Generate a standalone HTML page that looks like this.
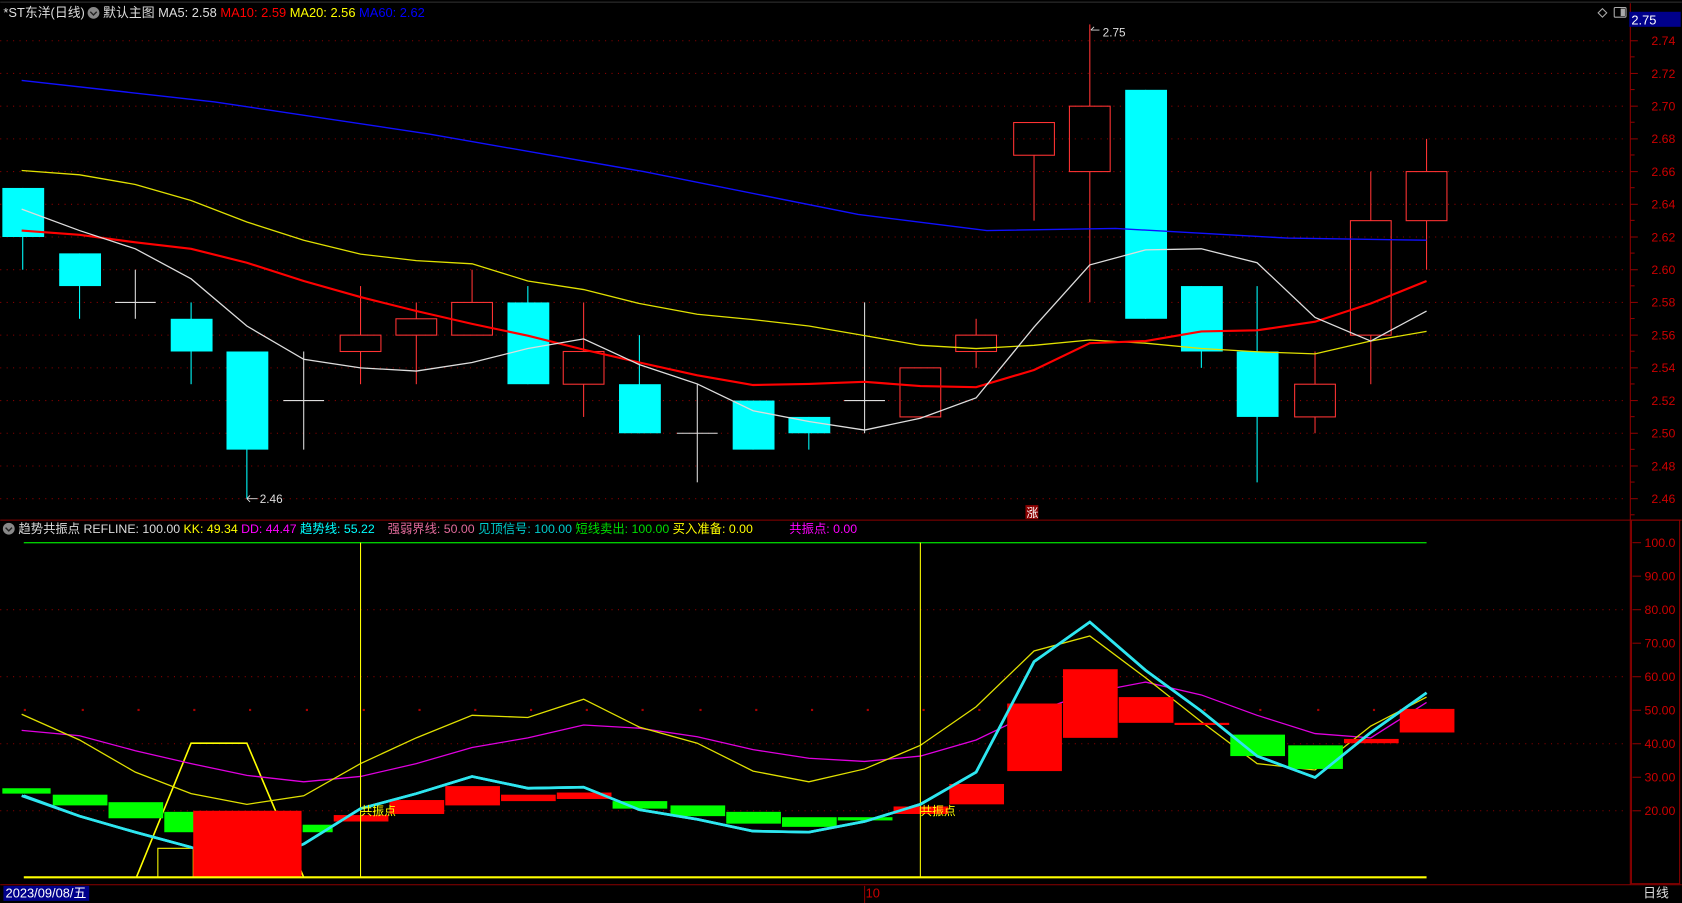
<!DOCTYPE html>
<html><head><meta charset="utf-8"><style>
html,body{margin:0;padding:0;background:#000;overflow:hidden}
svg{display:block}
text{font-family:"Liberation Sans","Noto Sans CJK SC",sans-serif}
</style></head><body>
<svg id="s" width="1682" height="903" viewBox="0 0 1568 842" xmlns="http://www.w3.org/2000/svg">
<rect width="1568" height="842" fill="#000"/>
<g id="g"></g>
<text x="3" y="16" font-size="12" fill="#ddd">*ST东洋(日线)</text>
<circle cx="87" cy="12" r="5.5" fill="#888"/><path d="M84 11l3 3 3-3" stroke="#222" fill="none" stroke-width="1.3"/>
<text x="96" y="16" font-size="12"><tspan fill="#ddd">默认主图 MA5: 2.58 </tspan><tspan fill="#f00">MA10: 2.59 </tspan><tspan fill="#ff0">MA20: 2.56 </tspan><tspan fill="#00f">MA60: 2.62</tspan></text>
<circle cx="8" cy="493" r="5.5" fill="#888"/><path d="M5 492l3 3 3-3" stroke="#222" fill="none" stroke-width="1.3"/>
<text x="17" y="497" font-size="11.5"><tspan fill="#ddd">趋势共振点 REFLINE: 100.00 </tspan><tspan fill="#ff0">KK: 49.34 </tspan><tspan fill="#f0f">DD: 44.47 </tspan><tspan fill="#0ff">趋势线: 55.22</tspan><tspan fill="#e06a9a" dx="12">强弱界线: 50.00 </tspan><tspan fill="#0cc">见顶信号: 100.00 </tspan><tspan fill="#0d0">短线卖出: 100.00 </tspan><tspan fill="#ff0">买入准备: 0.00</tspan><tspan fill="#f0f" dx="34">共振点: 0.00</tspan></text>
<rect x="1519" y="11" width="48" height="14" fill="#00008b"/>
<text x="1521" y="23" font-size="12" fill="#fff">2.75</text>
<path d="M1490 12l4 -4 4 4 -4 4z" stroke="#aaa" fill="none"/>
<rect x="1505" y="7" width="11" height="9" rx="1" stroke="#aaa" fill="none"/><rect x="1511" y="8" width="4" height="7" fill="#aaa"/>
<rect x="3" y="826" width="80" height="14" fill="#00008b"/>
<text x="5" y="837" font-size="12" fill="#fff">2023/09/08/五</text>
<text x="807" y="837" font-size="12" fill="#c00">10</text>
<text x="1532" y="837" font-size="12" fill="#ddd">日线</text>
<rect x="956" y="471" width="12" height="13" fill="#8b0000"/><text x="957" y="482" font-size="11" fill="#fff">涨</text>
<text x="1028" y="34" font-size="11" fill="#ddd">2.75</text><path d="M1017 28l3 -3 M1017 28l8 0" stroke="#ddd" fill="none" stroke-width=".8"/>
<text x="242" y="469" font-size="11" fill="#ddd">2.46</text><path d="M230 465l10 0 M230 465l3 -3 M230 465l3 3" stroke="#ddd" fill="none" stroke-width=".8"/>
</svg>
<script>
const g=document.getElementById('g');let h='';
const P=p=>38+(2.74-p)/0.02*30.5, V=v=>506+(100-v)*3.125;
h+='<line x1="0" y1="2" x2="1568" y2="2" stroke="#333"/>';
h+='<line x1="1520" y1="3" x2="1520" y2="825" stroke="#8b0000"/>';
h+='<line x1="0" y1="485" x2="1568" y2="485" stroke="#8b0000"/>';
h+='<line x1="0" y1="825" x2="1568" y2="825" stroke="#8b0000"/>';
h+='<rect x="1521" y="485" width="45" height="339" fill="none" stroke="#8b0000"/>';
h+='<line x1="806" y1="826" x2="806" y2="842" stroke="#8b0000"/>';
for(let i=0;i<15;i++){let p=2.74-i*0.02,y=P(p);h+=`<line x1="0" y1="${y}" x2="1518" y2="${y}" stroke="#8b0000" stroke-dasharray="1 5"/><line x1="1520" y1="${y}" x2="1527" y2="${y}" stroke="#8b0000"/><line x1="1520" y1="${y+15}" x2="1524" y2="${y+15}" stroke="#8b0000"/><text x="1562" y="${y+4}" font-size="11.5" fill="#c00" text-anchor="end">${p.toFixed(2)}</text>`}
for(let v=100;v>=20;v-=10){let y=V(v);h+=`<line x1="1522" y1="${y}" x2="1530" y2="${y}" stroke="#8b0000"/><text x="1562" y="${y+4}" font-size="11.5" fill="#c00" text-anchor="end">${v==100?'100.0':v.toFixed(2)}</text>`;if(v%20==0&&v<100)h+=`<line x1="0" y1="${y}" x2="1518" y2="${y}" stroke="#8b0000" stroke-dasharray="1 5"/>`}
const C=[[21,2.65,2.62,2.65,2.60],[74,2.61,2.59,2.61,2.57],[126,2.58,2.58,2.60,2.57],[178,2.57,2.55,2.58,2.53],[230,2.55,2.49,2.55,2.46],[283,2.52,2.52,2.55,2.49],[336,2.55,2.56,2.59,2.53],[388,2.56,2.57,2.58,2.53],[440,2.56,2.58,2.60,2.56],[492,2.58,2.53,2.59,2.53],[544,2.53,2.55,2.58,2.51],[596,2.53,2.50,2.56,2.50],[650,2.50,2.50,2.53,2.47],[702,2.52,2.49,2.52,2.49],[754,2.51,2.50,2.51,2.49],[806,2.52,2.52,2.58,2.50],[858,2.51,2.54,2.54,2.51],[910,2.55,2.56,2.57,2.54],[964,2.67,2.69,2.69,2.63],[1016,2.66,2.70,2.75,2.58],[1068,2.71,2.57,2.71,2.57],[1120,2.59,2.55,2.59,2.54],[1172,2.55,2.51,2.59,2.47],[1226,2.51,2.53,2.55,2.50],[1278,2.56,2.63,2.66,2.53],[1330,2.63,2.66,2.68,2.60]];
for(const[x,o,c,hi,lo]of C){let w=19;if(o==c){h+=`<line x1="${x}" y1="${P(hi)}" x2="${x}" y2="${P(lo)}" stroke="#ddd"/><line x1="${x-w}" y1="${P(o)}" x2="${x+w}" y2="${P(o)}" stroke="#ddd"/>`}else if(c>o){let t=P(c),b=P(o);h+=`<line x1="${x}" y1="${P(hi)}" x2="${x}" y2="${t}" stroke="#f33"/><line x1="${x}" y1="${b}" x2="${x}" y2="${P(lo)}" stroke="#f33"/><rect x="${x-w}" y="${t}" width="${2*w}" height="${b-t}" fill="none" stroke="#f33"/>`}else{let t=P(o),b=P(c);h+=`<line x1="${x}" y1="${P(hi)}" x2="${x}" y2="${P(lo)}" stroke="#0ff"/><rect x="${x-w}" y="${t}" width="${2*w+1}" height="${b-t}" fill="#0ff"/>`}}
const L=(pts,col,w)=>`<polyline points="${pts.map(p=>p.join(',')).join(' ')}" fill="none" stroke="${col}" stroke-width="${w}"/>`;
const X=[20,74,126,178,230,283,336,388,440,492,544,596,650,702,754,806,858,910,964,1016,1068,1120,1172,1226,1278,1330];
const Z=a=>a.map((y,i)=>[X[i],y]);
h+=L([[20,75],[200,95],[400,125],[600,160],[800,200],[920,215],[1040,213],[1200,222],[1330,224]],'#1010ff',1.3);
h+=L(Z([159,163,172,187,207,224,237,243,246,262,270,283,293,298,304,313,322,325,322,317,320,325,328,330,318,309]),'#e0e000',1.2);
h+=L(Z([215,219,226,232,245,262,277,290,302,313,326,338,350,359,358,356,360,361,345,320,318,309,308,300,283,262]),'#f00',2);
h+=L(Z([195,215,232,260,304,335,343,346,338,325,316,340,358,383,393,401,390,371,305,247,233,232,245,296,318,290]),'#ddd',1.2);
h+='<line x1="22" y1="506" x2="1330" y2="506" stroke="#0c0" stroke-width="1.3"/>';
for(let i=0;i<26;i++)h+=`<rect x="${X[i]+2}" y="661" width="2" height="2" fill="#a00"/>`;
h+=L([[127,818],[178,693],[230,693],[283,818]],'#ff0',1.5);
h+='<rect x="147" y="791" width="33" height="27" fill="none" stroke="#ff0"/>';
h+=L(Z([681,686,700,712,723,729,724,712,697,688,676,679,687,699,707,710,705,690,664,646,636,648,667,684,688,655]),'#e000e0',1.2);
h+=L(Z([666,690,720,740,750,742,712,688,667,669,652,678,693,719,729,717,695,659,607,593,632,673,712,718,677,650]),'#e0e000',1.2);
h+=L(Z([742,761,776,790,808,787,754,740,724,735,734,755,764,775,776,766,750,720,617,580,625,663,705,725,683,646]),'#2ee6f0',2.5);
const B=[[1,735,740],[1,741,751],[1,748,763],[1,757,776],[0,756,818],[1,769,776],[0,760,766],[0,746,759],[0,733,751],[0,741,747],[0,739,745],[1,747,754],[1,751,761],[1,757,768],[1,762,771],[1,762,765],[0,752,759],[0,731,750],[0,656,719],[0,624,688],[0,650,674],[0,674,676],[1,685,705],[1,695,717],[0,689,693],[0,661,683]];
B.forEach(([gr,t,b],i)=>{let x0=i==0?2:X[i]-25,w=i==0?45:51;if(i==4){x0=180;w=101}if(i==5){x0=282;w=28}h+=`<rect x="${x0}" y="${t}" width="${w}" height="${b-t}" fill="${gr?'#0f0':'#f00'}"/>`});
h+='<line x1="336" y1="506" x2="336" y2="818" stroke="#ff0"/><line x1="858" y1="506" x2="858" y2="818" stroke="#ff0"/>';
h+='<line x1="22" y1="818" x2="1330" y2="818" stroke="#ff0" stroke-width="2"/>';
h+=L([[178,790],[230,808],[283,787],[336,754]],'#2ee6f0',0);
h+=L([[283,787],[336,754],[388,740],[440,724],[492,735],[544,734],[596,755],[650,764],[702,775],[754,776],[806,766],[858,750],[910,720],[964,617],[1016,580],[1068,625],[1120,663],[1172,705],[1226,725],[1278,683],[1330,646]],'#2ee6f0',2.5);
h+=L([[22,742],[74,761],[126,776],[178,790]],'#2ee6f0',2.5);
h+='<text x="336" y="760" font-size="11" fill="#ff0">共振点</text><text x="858" y="760" font-size="11" fill="#ff0">共振点</text>';
g.innerHTML=h;
</script>
</body></html>
